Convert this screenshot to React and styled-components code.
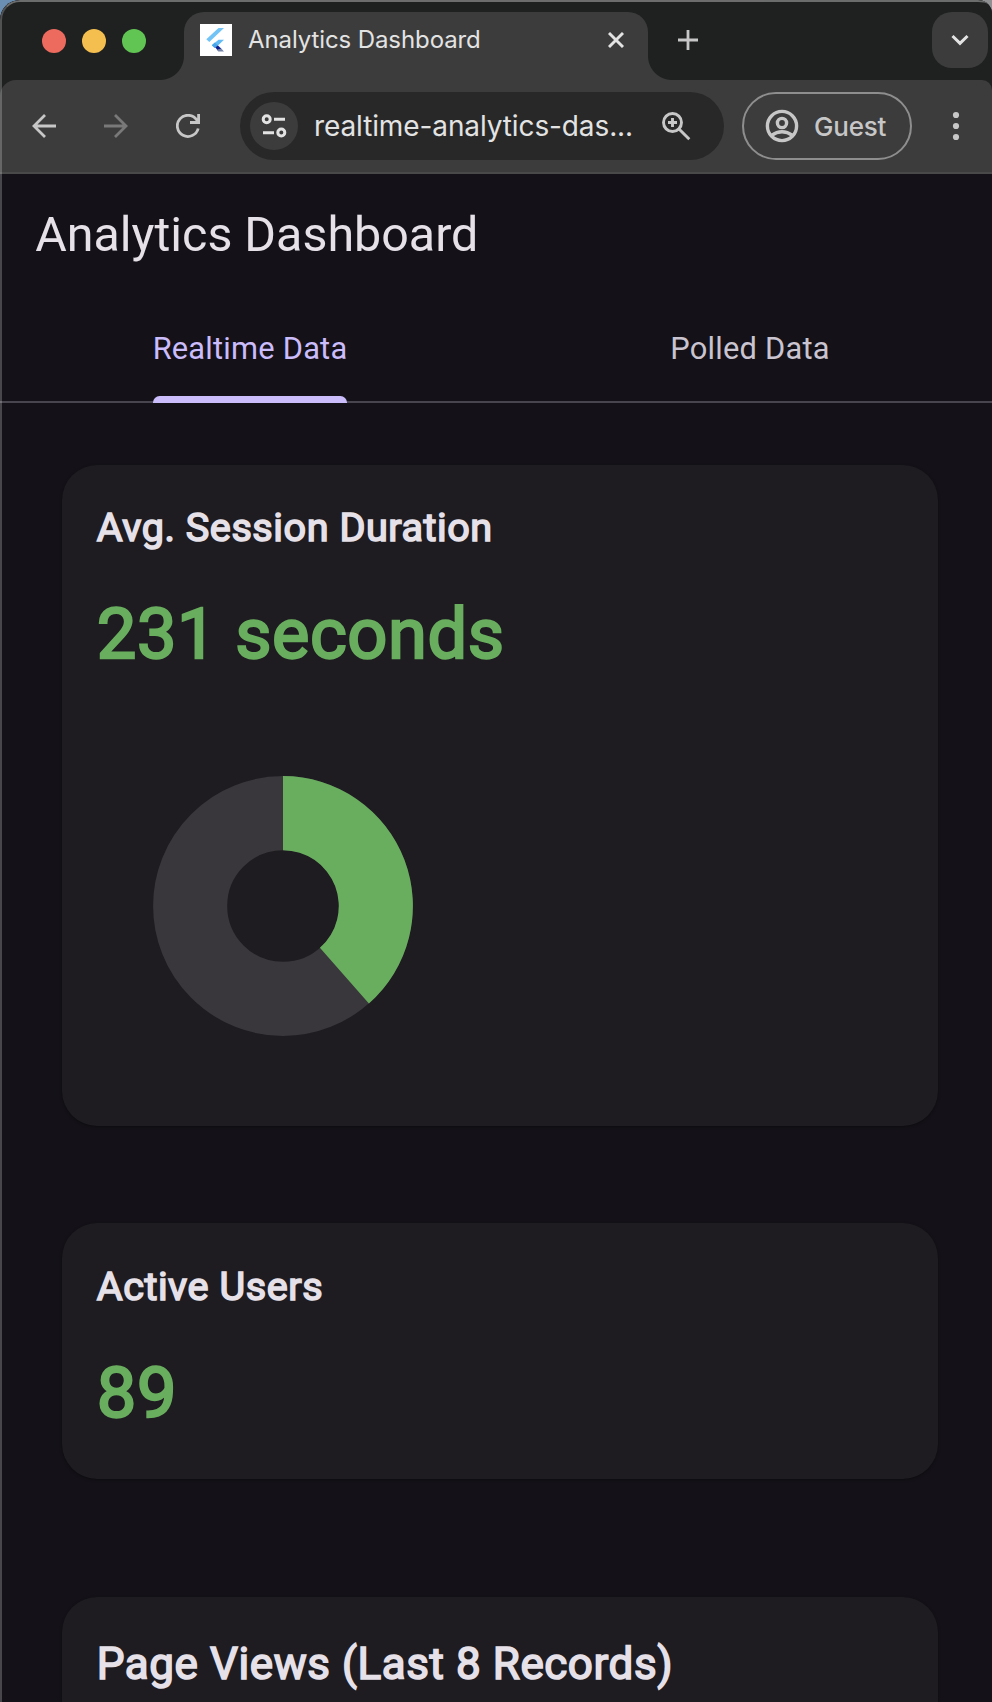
import React from "react";
import styled, { createGlobalStyle } from "styled-components";

const GlobalStyle = createGlobalStyle`
  *, *::before, *::after { box-sizing: border-box; }
  html, body { margin: 0; padding: 0; }
  body {
    background: linear-gradient(90deg, #6b8fb3 0, #6b8fb3 500px, #8f9092 500px);
    overflow: hidden;
  }
`;

const Window = styled.div`
  position: relative;
  width: 992px;
  height: 1702px;
  overflow: hidden;
  border-radius: 20px 14px 0 0;
  background: #141218;
  font-family: Roboto, "Liberation Sans", sans-serif;
`;

const WindowEdge = styled.div`
  position: absolute;
  inset: 0 -20px -20px 0;
  border: 2px solid rgba(255, 255, 255, 0.22);
  border-top-color: rgba(255, 255, 255, 0.34);
  border-radius: 20px 34px 0 0;
  pointer-events: none;
`;

/* Browser chrome */

const TabStrip = styled.div`
  display: flex;
  height: 80px;
  padding: 12px 4px 0 42px;
  background: #1f2120;
  font-family: Inter, "Liberation Sans", sans-serif;
`;

const TrafficLights = styled.div`
  display: flex;
  gap: 16px;
  padding-top: 17px;
  width: 142px;
`;

const Light = styled.span`
  width: 24px;
  height: 24px;
  border-radius: 50%;
  background: ${(p) => p.$color};
`;

const BrowserTab = styled.div`
  position: relative;
  display: flex;
  align-items: flex-start;
  width: 464px;
  height: 68px;
  padding: 12px 24px 0 16px;
  border-radius: 20px 20px 0 0;
  background: #3c3c3c;

  &::before,
  &::after {
    content: "";
    position: absolute;
    bottom: 0;
    width: 24px;
    height: 24px;
  }
  &::before {
    left: -24px;
    background: radial-gradient(circle at 0 0, transparent 23.5px, #3c3c3c 24.5px);
  }
  &::after {
    right: -24px;
    background: radial-gradient(circle at 100% 0, transparent 23.5px, #3c3c3c 24.5px);
  }
`;

const Favicon = styled.svg`
  display: block;
  width: 32px;
  height: 32px;
  background: #fff;
`;

const TabTitle = styled.span`
  flex: 1;
  margin-left: 16px;
  color: #e3e3e3;
  font-size: 24px;
  line-height: 32px;
  letter-spacing: -0.1px;
  white-space: nowrap;
`;

const Glyph = styled.svg`
  display: block;
  flex: none;
  width: ${(p) => p.$w}px;
  height: ${(p) => p.$h || p.$w}px;
  fill: none;
  stroke: ${(p) => p.$color || "#c7c7c7"};
  stroke-width: ${(p) => p.$stroke || 2.8};
`;

const CloseTab = styled.div`
  display: flex;
  align-items: center;
  height: 32px;
`;

const NewTab = styled.div`
  display: flex;
  align-items: center;
  height: 56px;
  margin-left: 30px;
`;

const TabSearch = styled.div`
  display: flex;
  align-items: center;
  justify-content: center;
  width: 56px;
  height: 56px;
  margin-left: auto;
  border-radius: 20px;
  background: #3c3c3c;
`;

const ToolbarBack = styled.div`
  background: #1f2120;
`;

const Toolbar = styled.div`
  display: flex;
  align-items: center;
  height: 94px;
  padding: 0 0 0 32px;
  border-radius: 16px 10px 0 0;
  border-bottom: 2px solid #494949;
  background: #3c3c3c;
  font-family: Inter, "Liberation Sans", sans-serif;
`;

const NavButtons = styled.div`
  display: flex;
  gap: 48px;
  width: 208px;
`;

const Omnibox = styled.div`
  display: flex;
  align-items: center;
  width: 484px;
  height: 68px;
  padding: 0 33px 0 10px;
  border-radius: 34px;
  background: #282828;
`;

const SiteInfo = styled.div`
  display: flex;
  align-items: center;
  justify-content: center;
  width: 48px;
  height: 48px;
  border-radius: 50%;
  background: #3c3c3c;
`;

const Url = styled.span`
  flex: 1;
  margin-left: 16px;
  color: #e3e3e3;
  font-size: 28px;
  line-height: 40px;
  letter-spacing: -0.11px;
  white-space: nowrap;
`;

const Profile = styled.div`
  display: flex;
  align-items: center;
  width: 170px;
  height: 68px;
  margin-left: 18px;
  padding-left: 21px;
  border: 2px solid #8e8e8e;
  border-radius: 34px;
  color: #c7c7c7;
  font-size: 26px;
  font-weight: 500;
  letter-spacing: -0.2px;
`;

const ProfileName = styled.span`
  margin-left: 15px;
`;

const MenuDots = styled(Glyph)`
  margin-left: 40px;
`;

/* Dashboard page */

const Page = styled.main`
  width: 1000px;
`;

const PageTitle = styled.h1`
  margin: 0;
  padding: 30px 0 0 35.2px;
  height: 123px;
  color: #e6e0e9;
  font-size: 48.4px;
  line-height: 62px;
  font-weight: 400;
`;

const Tabs = styled.nav`
  display: grid;
  grid-template: 106px / 1fr 1fr;
`;

const TabCell = styled.div`
  display: flex;
  justify-content: center;
  border-bottom: 2px solid #49454f;
`;

const TabLabel = styled.div`
  position: relative;
  height: 106px;
  padding-top: 30px;
  color: ${(p) => (p.$active ? "#cbbcfb" : "#cac4d0")};
  font-size: 30.8px;
  line-height: 44px;
  letter-spacing: 0.22px;

  &::after {
    content: "";
    display: ${(p) => (p.$active ? "block" : "none")};
    position: absolute;
    left: 0;
    right: 0;
    bottom: 0.2px;
    height: 6.6px;
    border-radius: 6.6px 6.6px 0 0;
    background: #cbbcfb;
  }
`;

const CardList = styled.section`
  display: flex;
  flex-direction: column;
  padding: 61.5px 62px 0;
`;

const Card = styled.article`
  flex: none;
  height: ${(p) => p.$height}px;
  margin-bottom: ${(p) => p.$after || 0}px;
  padding: 35.7px 35.2px 35.2px 34.8px;
  border-radius: 35.2px;
  background: #1e1c20;
  box-shadow: 0 1px 3px rgba(0, 0, 0, 0.4);
`;

const CardTitle = styled.h2`
  margin: 0;
  color: #e6e0e9;
  font-size: ${(p) => (p.$large ? 44 : 39.6)}px;
  line-height: 1.43;
  font-weight: 400;
  letter-spacing: 0.55px;
  -webkit-text-stroke: 1.6px #e6e0e9;
  white-space: nowrap;
`;

const Metric = styled.div`
  margin-top: 27.2px;
  color: #69ae5f;
  font-size: 70.4px;
  line-height: 1.43;
  letter-spacing: 0.55px;
  -webkit-text-stroke: 2.3px #69ae5f;
`;

const Donut = styled.svg`
  display: block;
  width: 260px;
  height: 260px;
  margin: 91px 0 0 55.8px;
`;

const OUTER = 129.9;
const INNER = 55.8;

const point = (radius, degrees) => {
  const a = (degrees * Math.PI) / 180;
  return `${130 + radius * Math.sin(a)} ${130 - radius * Math.cos(a)}`;
};

function DonutChart({ value, max }) {
  const end = (value / max) * 360;
  const large = end > 180 ? 1 : 0;
  return (
    <Donut viewBox="0 0 260 260">
      <circle cx="130" cy="130" r={(OUTER + INNER) / 2} fill="none" stroke="#39373b" strokeWidth={OUTER - INNER} />
      <path
        fill="#69ae5f"
        d={`M${point(OUTER, 0)} A${OUTER} ${OUTER} 0 ${large} 1 ${point(OUTER, end)} L${point(INNER, end)} A${INNER} ${INNER} 0 ${large} 0 ${point(INNER, 0)} Z`}
      />
    </Donut>
  );
}

function FlutterLogo() {
  return (
    <Favicon viewBox="0 0 32 32">
      <path d="M18.5 4H24L9.3 18 6.3 15.3z" fill="#72c4f7" />
      <path d="M18.5 15.8H24L18 21.5l-3.2 2.6-3-2.9z" fill="#62bbf5" />
      <path d="M11.8 21.2l3-2.8 3.2 3.1-3.2 2.6z" fill="#48a5ea" />
      <path d="M15.4 23.3l2.6-1.8 3.4 3.2-4 1.6z" fill="#0a1c8c" />
      <path d="M16.8 25.8l4.4-1.4 2.8 3h-5.6z" fill="#7484a8" />
    </Favicon>
  );
}

function BrowserChrome() {
  return (
    <header>
      <TabStrip>
        <TrafficLights>
          <Light $color="#ed6a5f" />
          <Light $color="#f5bf4f" />
          <Light $color="#61c554" />
        </TrafficLights>
        <BrowserTab>
          <FlutterLogo />
          <TabTitle>Analytics Dashboard</TabTitle>
          <CloseTab>
            <Glyph $w={16} $stroke={2.9} $color="#e3e3e3" viewBox="0 0 16 16">
              <path d="M1 1l14 14M15 1L1 15" />
            </Glyph>
          </CloseTab>
        </BrowserTab>
        <NewTab>
          <Glyph $w={20} $stroke={2.8} viewBox="0 0 20 20">
            <path d="M10 0v20M0 10h20" />
          </Glyph>
        </NewTab>
        <TabSearch>
          <Glyph $w={18} $h={12} $stroke={3} $color="#e3e3e3" viewBox="0 0 18 12">
            <path d="M1.5 2L9 9.4 16.5 2" />
          </Glyph>
        </TabSearch>
      </TabStrip>
      <ToolbarBack>
        <Toolbar>
          <NavButtons>
            <Glyph $w={24} viewBox="0 0 24 24">
              <path d="M24 12H2M13 1L2 12l11 11" />
            </Glyph>
            <Glyph $w={24} $color="#797979" viewBox="0 0 24 24">
              <path d="M0 12h22M11 1l11 11-11 11" />
            </Glyph>
            <Glyph $w={24} viewBox="0 0 24 24">
              <path d="M22.2 14.5A10.6 10.6 0 1 1 20.6 5.8L22 8M22.6 0v8.5H14" />
            </Glyph>
          </NavButtons>
          <Omnibox>
            <SiteInfo>
              <Glyph $w={26} $stroke={3} $color="#e3e3e3" viewBox="0 0 26 26">
                <circle cx="5.7" cy="6.3" r="3.5" />
                <path d="M13 6.3h11M2 19.7h11" />
                <circle cx="20.3" cy="19.5" r="3.5" />
              </Glyph>
            </SiteInfo>
            <Url>realtime-analytics-das...</Url>
            <Glyph $w={30} $stroke={2.9} viewBox="0 0 30 30">
              <circle cx="11.5" cy="11.5" r="9" />
              <path d="M18 18l10.3 10.3M11.5 7v9M7 11.5h9" />
            </Glyph>
          </Omnibox>
          <Profile>
            <Glyph $w={34} $stroke={3.4} viewBox="0 0 34 34">
              <circle cx="17" cy="17" r="14.6" />
              <circle cx="17" cy="14" r="4.6" />
              <path d="M7 26.2c6-4.7 14-4.7 20 0" />
            </Glyph>
            <ProfileName>Guest</ProfileName>
          </Profile>
          <MenuDots as="svg" width="8" height="30" viewBox="0 0 8 30">
            {[4, 15, 26].map((y) => (
              <circle key={y} cx="4" cy={y} r="3.1" fill="#c7c7c7" stroke="none" />
            ))}
          </MenuDots>
        </Toolbar>
      </ToolbarBack>
    </header>
  );
}

export default function App() {
  return (
    <>
      <GlobalStyle />
      <Window>
        <BrowserChrome />
        <Page>
          <PageTitle>Analytics Dashboard</PageTitle>
          <Tabs>
            <TabCell>
              <TabLabel $active>Realtime Data</TabLabel>
            </TabCell>
            <TabCell>
              <TabLabel>Polled Data</TabLabel>
            </TabCell>
          </Tabs>
          <CardList>
            <Card $height={661.8} $after={97.1}>
              <CardTitle>Avg. Session Duration</CardTitle>
              <Metric>231 seconds</Metric>
              <DonutChart value={231} max={600} />
            </Card>
            <Card $height={255.2} $after={118.8}>
              <CardTitle>Active Users</CardTitle>
              <Metric>89</Metric>
            </Card>
            <Card $height={500}>
              <CardTitle $large>Page Views (Last 8 Records)</CardTitle>
            </Card>
          </CardList>
        </Page>
        <WindowEdge />
      </Window>
    </>
  );
}
